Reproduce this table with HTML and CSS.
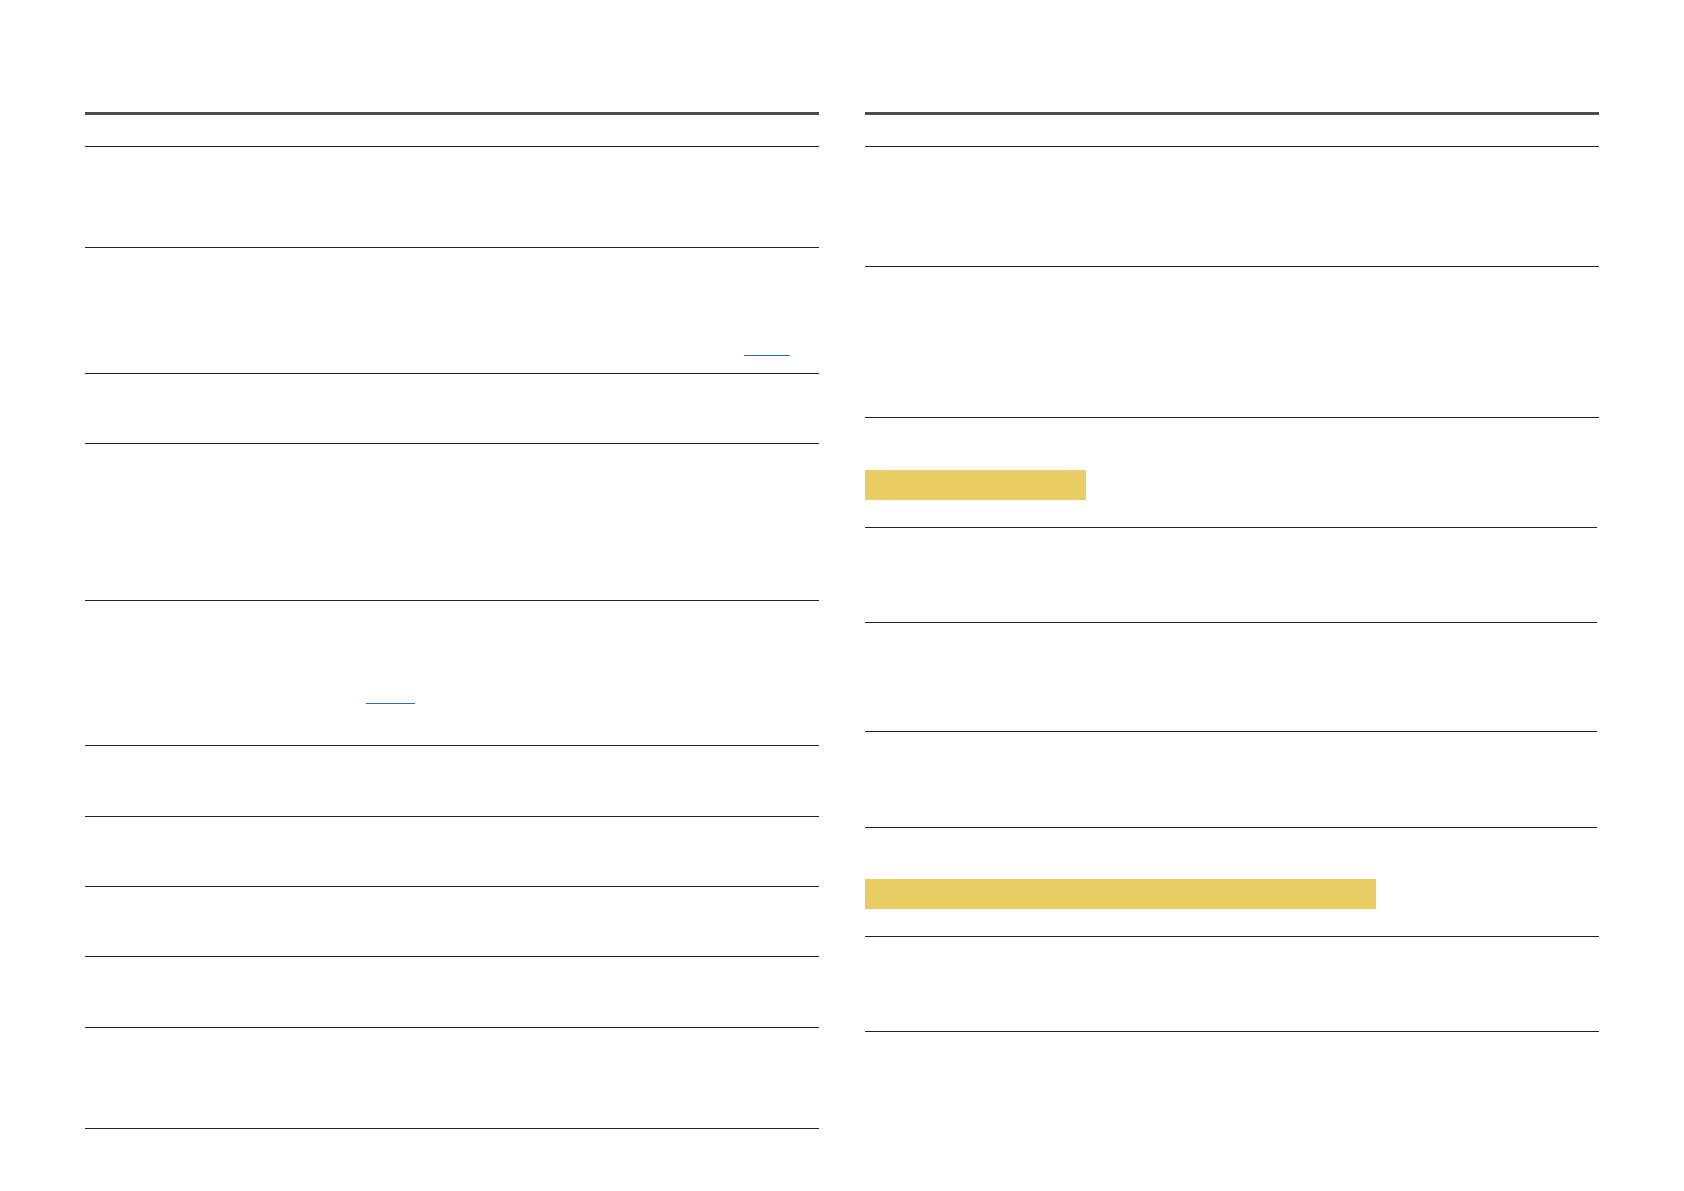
FILE: index.html
```html
<!DOCTYPE html>
<html lang="en">
<head>
<meta charset="utf-8">
<title>Document page</title>
<link rel="stylesheet" href="styles.css">
</head>
<body>
<div class="page">
  <section class="column">
    <div class="table">
      <div class="row r31"></div>
      <div class="row r100"></div>
      <div class="row r125"><div class="cell cell-a"><span class="xref xref-a"></span></div></div>
      <div class="row r69"></div>
      <div class="row r156"></div>
      <div class="row r144"><div class="cell cell-b"><span class="xref xref-b"></span></div></div>
      <div class="row r70"></div>
      <div class="row r69"></div>
      <div class="row r69"></div>
      <div class="row r70"></div>
      <div class="row r100"></div>
    </div>
  </section>
  <section class="column">
    <div class="table">
      <div class="row r31"></div>
      <div class="row r119"></div>
      <div class="row r150"></div>
    </div>
    <div class="heading heading-short"></div>
    <div class="subtable">
      <div class="row r94"></div>
      <div class="row r108"></div>
      <div class="row r95"></div>
    </div>
    <div class="heading heading-long"></div>
    <div class="subtable subtable-full">
      <div class="row r94"></div>
    </div>
  </section>
</div>
</body>
</html>
```

FILE: styles.css
```css
html, body {
  margin: 0;
  padding: 0;
  background: #ffffff;
}

body {
  font-family: "Liberation Sans", Arial, sans-serif;
  color: #231f20;
}

.page {
  display: flex;
  gap: 46px;
  padding: 112px 0 0 85px;
}

.column {
  width: 734px;
  display: flex;
  flex-direction: column;
}

.table {
  border-top: 3px solid #4d4d4d;
}

.row {
  border-bottom: 1px solid #231f20;
  box-sizing: content-box;
}

.subtable {
  width: 732px;
  border-top: 1px solid #231f20;
}

.subtable-full {
  width: 734px;
}

.r31 { height: 31px; }
.r69 { height: 69px; }
.r70 { height: 70px; }
.r94 { height: 94px; }
.r95 { height: 95px; }
.r100 { height: 100px; }
.r108 { height: 108px; }
.r119 { height: 119px; }
.r125 { height: 125px; }
.r144 { height: 144px; }
.r150 { height: 150px; }
.r156 { height: 156px; }

.heading {
  height: 30px;
  background: #eacc64;
  margin: 52px 0 27px;
}

.heading-short { width: 221px; }
.heading-long { width: 511px; margin-top: 51px; }

.cell-a { padding: 107px 0 0 659px; }
.cell-b { padding: 102px 0 0 281px; }

.xref {
  display: block;
  height: 1px;
  background: #2f6fae;
}

.xref-a { width: 46px; }
.xref-b { width: 49px; }
```
